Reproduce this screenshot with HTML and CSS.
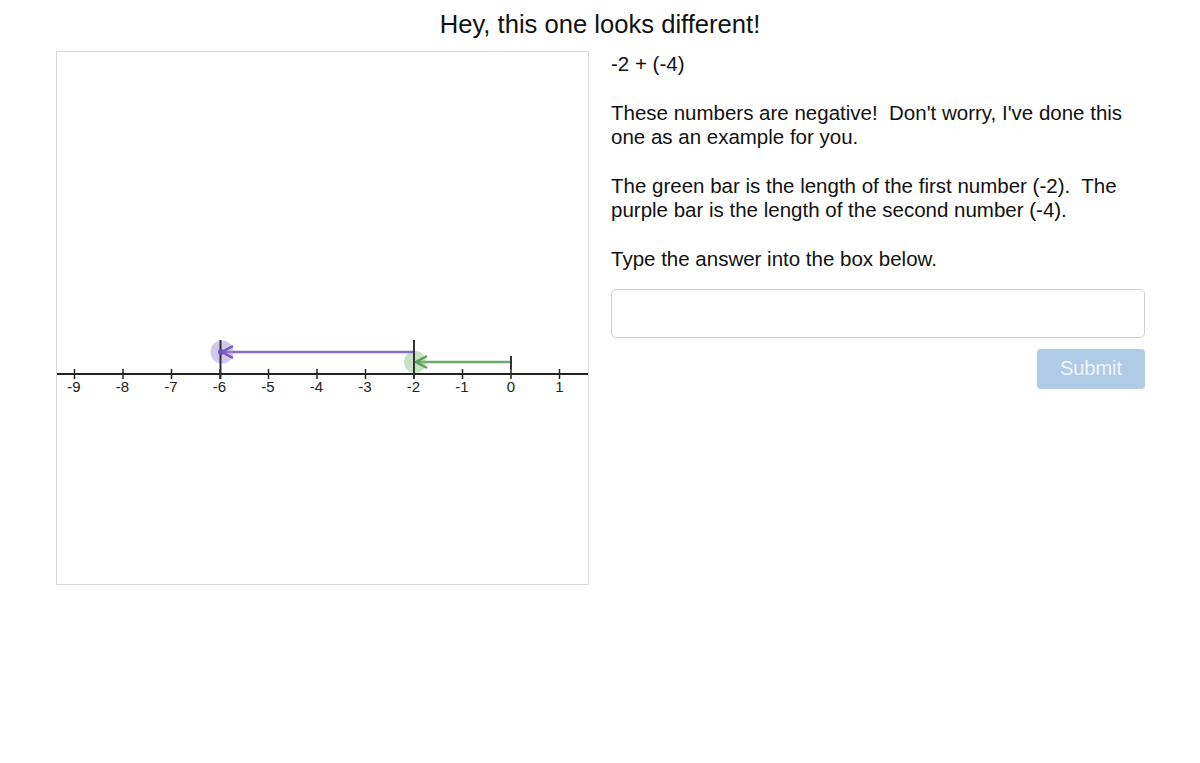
FILE: index.html
```html
<!DOCTYPE html>
<html>
<head>
<meta charset="utf-8">
<link rel="stylesheet" href="styles.css">
</head>
<body>
<h1 class="title">Hey, this one looks different!</h1>
<div class="main">
  <div class="canvas">
    <svg class="numline" width="531" height="532" viewBox="57 52 531 532" xmlns="http://www.w3.org/2000/svg">
      <!-- axis -->
      <line x1="57" y1="374" x2="588" y2="374" stroke="#222" stroke-width="2"/>
      <g stroke="#222" stroke-width="1.5">
        <line x1="74.5" y1="369" x2="74.5" y2="379"/>
        <line x1="123" y1="369" x2="123" y2="379"/>
        <line x1="171.5" y1="369" x2="171.5" y2="379"/>
        <line x1="220" y1="369" x2="220" y2="379"/>
        <line x1="268.5" y1="369" x2="268.5" y2="379"/>
        <line x1="317" y1="369" x2="317" y2="379"/>
        <line x1="365.5" y1="369" x2="365.5" y2="379"/>
        <line x1="414" y1="369" x2="414" y2="379"/>
        <line x1="462.5" y1="369" x2="462.5" y2="379"/>
        <line x1="511" y1="369" x2="511" y2="379"/>
        <line x1="559.5" y1="369" x2="559.5" y2="379"/>
      </g>
      <g class="labels" font-family="Liberation Sans, Arial, sans-serif" font-size="15" fill="#222" text-anchor="middle">
        <text x="74" y="392">-9</text>
        <text x="122.5" y="392">-8</text>
        <text x="171" y="392">-7</text>
        <text x="219.5" y="392">-6</text>
        <text x="268" y="392">-5</text>
        <text x="316.5" y="392">-4</text>
        <text x="365" y="392">-3</text>
        <text x="413.5" y="392">-2</text>
        <text x="462" y="392">-1</text>
        <text x="511" y="392">0</text>
        <text x="559.5" y="392">1</text>
      </g>
      <!-- green bar: 0 to -2 -->
      <line x1="416" y1="362" x2="511" y2="362" stroke="#6aa96a" stroke-width="2.5"/>
      <line x1="511" y1="356" x2="511" y2="369" stroke="#333" stroke-width="2"/>
      <circle cx="415" cy="362" r="11" fill="#7fbf7f" fill-opacity="0.45"/>
      <polyline points="427,356 416,362 427,368" fill="none" stroke="#5a9e5a" stroke-width="2.5"/>
      <!-- purple bar: -2 to -6 -->
      <line x1="222" y1="352" x2="414" y2="352" stroke="#8a6cc8" stroke-width="2.5"/>
      <line x1="414" y1="340" x2="414" y2="379" stroke="#333" stroke-width="2"/>
      <circle cx="222" cy="352" r="11.5" fill="#9a86d0" fill-opacity="0.45"/>
      <line x1="220.5" y1="340" x2="220.5" y2="379" stroke="#333" stroke-width="2"/>
      <circle cx="221" cy="352" r="3" fill="#6a50b8"/>
      <polyline points="233,346 222,352 233,358" fill="none" stroke="#7257c0" stroke-width="2.5"/>
    </svg>
  </div>
  <div class="panel">
    <p>-2 + (-4)</p>
    <p>These numbers are negative!&nbsp; Don't worry, I've done this one as an example for you.</p>
    <p>The green bar is the length of the first number (-2).&nbsp; The purple bar is the length of the second number (-4).</p>
    <p>Type the answer into the box below.</p>
    <input class="answer" type="text">
    <div class="actions">
      <button class="submit" disabled>Submit</button>
    </div>
  </div>
</div>
</body>
</html>
```
FILE: styles.css
```css
html, body {
  margin: 0;
  padding: 0;
  background: #fff;
}
body {
  font-family: "Liberation Sans", Arial, Helvetica, sans-serif;
  color: #111;
}
.title {
  margin: 0;
  height: 51px;
  padding-top: 9px;
  box-sizing: border-box;
  text-align: center;
  font-weight: normal;
  font-size: 25.6px;
  line-height: 30px;
}
.main {
  display: flex;
  align-items: flex-start;
  padding-left: 56px;
}
.canvas {
  width: 531px;
  height: 532px;
  border: 1px solid #d9d9d9;
}
.numline {
  display: block;
}
.panel {
  margin-left: 22px;
  width: 534px;
  font-size: 20.5px;
  line-height: 24.4px;
  padding-top: 1px;
}
.panel p {
  margin: 0 0 24.4px 0;
}
.panel p:nth-of-type(4) {
  margin-bottom: 17px;
}
.answer {
  display: block;
  box-sizing: border-box;
  width: 534px;
  height: 49px;
  border: 1px solid #cfcfcf;
  border-radius: 5px;
  margin: 0;
  padding: 0 10px;
  font-size: 20px;
  font-family: inherit;
  outline: none;
  background: #fff;
}
.actions {
  display: flex;
  justify-content: flex-end;
  margin-top: 11px;
}
.submit {
  width: 108px;
  height: 40px;
  border: none;
  border-radius: 4px;
  background: #afcbe6;
  color: #eef4fa;
  font-family: inherit;
  font-size: 20px;
  padding: 0;
}
```
